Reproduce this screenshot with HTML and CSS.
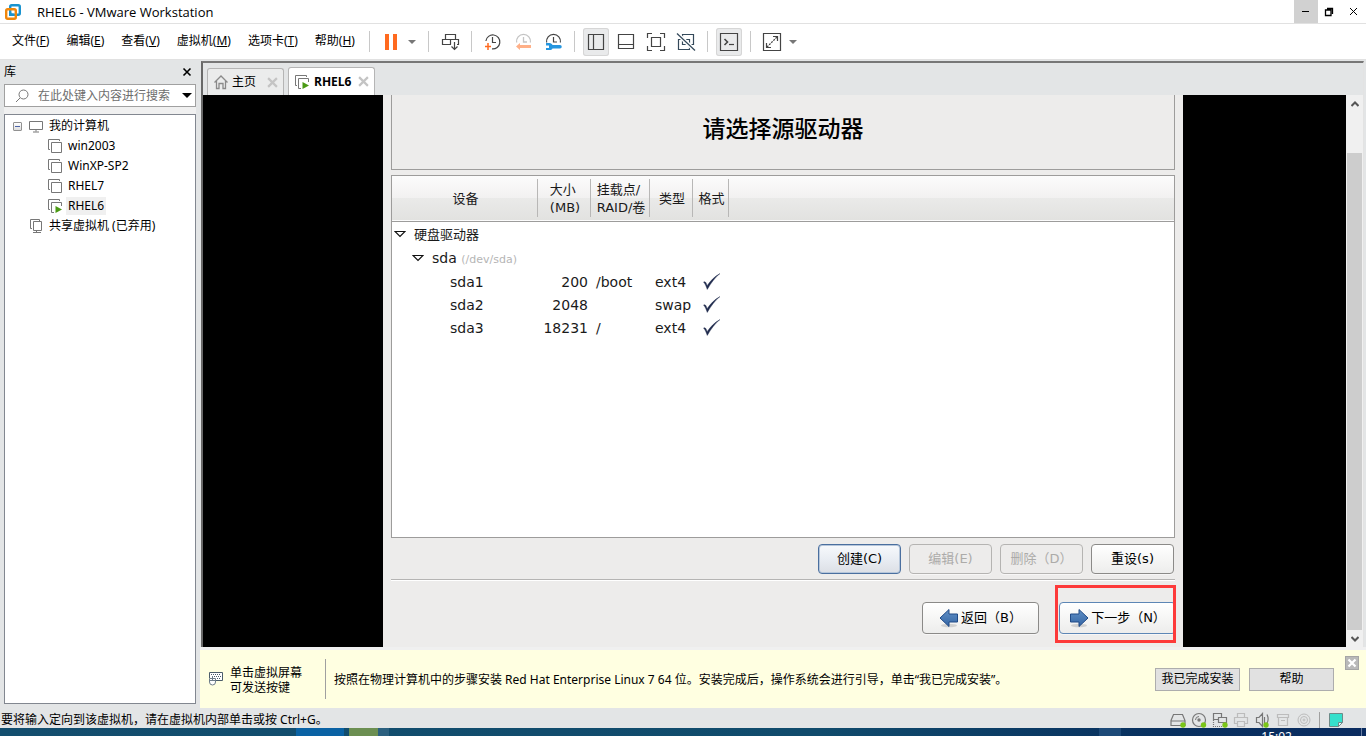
FILE: index.html
```html
<!DOCTYPE html>
<html lang="zh-CN">
<head>
<meta charset="utf-8">
<title>RHEL6 - VMware Workstation</title>
<link rel="stylesheet" href="styles.css">
</head>
<body>
<svg class="defs" aria-hidden="true">
  <symbol id="vm" viewBox="0 0 16 16"><path d="M3 11.500H1.500v-10h11V3" class="line"/><path d="M4.500 4.500h10v10h-10z" class="line"/></symbol>
  <symbol id="vm-on" viewBox="0 0 16 16"><path d="M3 11.500H1.500v-10h11V3M7 14.500H4.500v-10h10V8" class="line"/><path d="M8.500 8l6.500 3.500-6.500 3.500z" fill="#4a9a14"/></symbol>
  <symbol id="check" viewBox="0 0 18 18"><path d="M1.500 9.500c1.200-.6 2.300-.3 3.300 3.500C8 8.500 11.500 4.500 17 1.500 12 5.500 8.500 10.500 5 16.500 3.800 13.500 3 11 1.500 9.500z" fill="#1f2a4d" stroke="#1f2a4d" stroke-width=".4"/></symbol>
  <symbol id="expand" viewBox="0 0 12 8"><path d="M1 1.500h10L6 6.500z" fill="#fff" stroke="#111" stroke-width="1.200"/></symbol>
  <symbol id="caret" viewBox="0 0 8 4"><path d="M0 0h8L4 4z"/></symbol>
  <symbol id="cross" viewBox="0 0 10 10"><path d="M1 1l8 8M9 1L1 9" fill="none" stroke="currentColor" stroke-width="2"/></symbol>
  <linearGradient id="blue" x1="0" y1="0" x2="0" y2="1"><stop offset="0" stop-color="#6190c6"/><stop offset="1" stop-color="#3465a4"/></linearGradient>
</svg>

<div class="window">
  <header class="titlebar">
    <svg class="logo" viewBox="0 0 16 16"><g fill="none" stroke-width="2.400"><rect x="5.200" y="1.200" width="9.600" height="9.600" rx="1.500" stroke="#1993cf"/><rect x="1.200" y="5.200" width="9.600" height="9.600" rx="1.500" stroke="#f0870c"/><path d="M5.200 8.500v2.300h3.500" stroke="#1993cf"/></g></svg>
    <h1 class="title">RHEL6 - VMware Workstation</h1>
    <button class="win-btn win-btn-hover" aria-label="最小化"><svg viewBox="0 0 10 10"><path d="M2 4.500h7" stroke="#000" fill="none"/></svg></button>
    <button class="win-btn" aria-label="还原"><svg viewBox="0 0 10 10"><path d="M1.500 3h5.500v5.500H1.500zM3 1.500h5.500V7" stroke="#000" stroke-width="1.300" fill="none"/></svg></button>
    <button class="win-btn" aria-label="关闭"><svg viewBox="0 0 10 10"><path d="M2 1l7 7M9 1L2 8" stroke="#000" fill="none"/></svg></button>
  </header>

  <div class="menubar">
    <nav class="menu">
      <button>文件(<u>F</u>)</button>
      <button>编辑(<u>E</u>)</button>
      <button>查看(<u>V</u>)</button>
      <button>虚拟机(<u>M</u>)</button>
      <button>选项卡(<u>T</u>)</button>
      <button>帮助(<u>H</u>)</button>
    </nav>
    <div class="toolbar">
      <span class="sep"></span>
      <div class="tools">
        <button class="tool" aria-label="挂起"><svg viewBox="0 0 26 28"><path d="M7 6h4v16H7zM15 6h4v16h-4z" fill="#ff6a1f"/></svg></button>
        <button class="drop" aria-label="电源选项"><svg><use href="#caret"/></svg></button>
      </div>
      <span class="sep"></span>
      <div class="tools">
        <button class="tool" aria-label="发送按键"><svg viewBox="0 0 26 28"><path d="M8.500 11.500v-5h10v5M14 16.500H5.500v-5h16v5h-1.500M13.500 11.500v5" class="dark"/><path d="M17.500 14v7M14.500 18.500l3 3 3-3" class="dark"/></svg></button>
      </div>
      <span class="sep"></span>
      <div class="tools tools-wide">
        <button class="tool" aria-label="拍摄快照"><svg viewBox="0 0 26 28"><path d="M5.900 13A7 7 0 1 1 12 20.900M12.500 9v5.500H16" class="dark"/><path d="M8 15v7M5 18.500h6" stroke="#ff6a1f" stroke-width="1.500" fill="none"/></svg></button>
        <button class="tool" aria-label="恢复快照"><svg viewBox="0 0 26 28"><path d="M6.600 14.500a7 7 0 1 1 13.800 0M13.500 9v5H17" fill="none" stroke="#c4c4c4" stroke-width="1.300"/><path d="M6 18.500l4-3.500v2h11v3H10v2z" fill="#ffb088"/></svg></button>
        <button class="tool" aria-label="快照管理器"><svg viewBox="0 0 26 28"><path d="M6.600 14.500a7 7 0 1 1 13.800 0M13.500 9v5H17" class="dark"/><path d="M6 15h3.500c1.500 0 2.500 1 3 2H20a1.500 1.500 0 0 1 0 3.500h-7.500c-.5 1-1.500 1.500-3 1.500H6v-2h3v-2.500H6z" fill="#2596e0"/></svg></button>
      </div>
      <span class="sep"></span>
      <div class="tools tools-wide">
        <button class="tool pressed" aria-label="显示库"><svg viewBox="0 0 26 28"><path d="M5.500 6.500h15v15h-15zM10.500 6.500v15" class="dark"/></svg></button>
        <button class="tool" aria-label="缩略图栏"><svg viewBox="0 0 26 28"><path d="M5.500 6.500h15v14h-15zM5.500 16.500h15" class="dark"/></svg></button>
        <button class="tool" aria-label="全屏"><svg viewBox="0 0 26 28"><path d="M4.500 10V5.500H9M17 5.500h4.500V10M21.500 18v4.500H17M9 22.500H4.500V18M8.500 9.500h9v9h-9z" class="dark"/></svg></button>
        <button class="tool" aria-label="Unity"><svg viewBox="0 0 26 28"><path d="M9.500 6.500h11v10h-11zM5.500 11.500h11v10h-11z" stroke="#34495a" stroke-width="1.200" fill="none"/><path d="M4 5.500l18 17" stroke="#fff" stroke-width="4" fill="none"/><path d="M4 5.500l18 17" stroke="#34495a" stroke-width="1.200" fill="none"/></svg></button>
      </div>
      <span class="sep"></span>
      <div class="tools">
        <button class="tool pressed" aria-label="控制台视图"><svg viewBox="0 0 26 28"><path d="M4.500 5.500h17v17h-17z" class="dark"/><path d="M8.500 11l3 3-3 3" fill="none" stroke="#444" stroke-width="1.600"/><path d="M13 16.500h5" class="dark"/></svg></button>
      </div>
      <span class="sep"></span>
      <div class="tools">
        <button class="tool" aria-label="拉伸客户机"><svg viewBox="0 0 26 28"><path d="M4.500 5.500h17v17h-17zM14 8.500h4.500V13M7.500 15v4.500H12" class="dark"/><path d="M8 19L18 9" class="dark" stroke-dasharray="2 1"/></svg></button>
        <button class="drop" aria-label="拉伸选项"><svg><use href="#caret"/></svg></button>
      </div>
    </div>
  </div>

  <main class="main">
    <aside class="library">
      <div class="library-head"><h2>库</h2><button aria-label="关闭库"><svg viewBox="0 0 10 10"><path d="M1.500 1.500l7 7M8.500 1.500l-7 7" stroke="#000" stroke-width="1.600"/></svg></button></div>
      <div class="search">
        <svg class="search-icon" viewBox="0 0 14 14"><path d="M5 9L1 13" class="line"/><circle cx="8.500" cy="5.500" r="4.500" class="line"/></svg>
        <input type="text" aria-label="搜索" placeholder="在此处键入内容进行搜索">
        <button aria-label="搜索选项"><svg viewBox="0 0 10 5"><path d="M0 0h10L5 5z"/></svg></button>
      </div>
      <ul class="tree">
        <li>
          <div class="node"><button class="toggle" aria-label="折叠"></button><svg viewBox="0 0 16 16"><path d="M1.500 3.500h13v8h-13zM8 12v1.500M5 14h6" class="line"/></svg><span>我的计算机</span></div>
          <ul>
            <li class="node"><svg><use href="#vm"/></svg><span>win2003</span></li>
            <li class="node"><svg><use href="#vm"/></svg><span>WinXP-SP2</span></li>
            <li class="node"><svg><use href="#vm"/></svg><span>RHEL7</span></li>
            <li class="node"><svg><use href="#vm-on"/></svg><span class="selected">RHEL6</span></li>
          </ul>
        </li>
        <li class="node node-shared"><svg viewBox="0 0 16 16"><path d="M4 10.500H2.500v-9h9V3M5.500 3.500h8v9h-8zM8.500 12.500V14M5 14.500h8" class="line"/></svg><span>共享虚拟机 (已弃用)</span></li>
      </ul>
    </aside>

    <section class="workspace">
      <div class="console">
        <div class="tabs">
          <div class="tab"><svg class="tab-icon" viewBox="0 0 16 16"><path d="M1.500 8.500L8 2l6.500 6.500M3.500 7v7.500H6v-5h4v5h2.500V7" fill="none" stroke="#8a8a8a" stroke-width="1.300"/></svg><button class="tab-name">主页</button><button class="tab-close" aria-label="关闭主页"><svg><use href="#cross"/></svg></button></div>
          <div class="tab tab-active"><svg class="tab-icon"><use href="#vm-on"/></svg><button class="tab-name">RHEL6</button><button class="tab-close" aria-label="关闭 RHEL6"><svg><use href="#cross"/></svg></button></div>
        </div>
        <div class="viewport">
          <div class="stage">
            <div class="guest">
              <div class="banner"><h2>请选择源驱动器</h2></div>
              <div class="grid-box">
                <table class="disks">
                  <colgroup><col class="c-dev"><col class="c-size"><col class="c-mount"><col class="c-type"><col class="c-format"><col></colgroup>
                  <thead>
                    <tr><th><span>设备</span></th><th><span>大小<br>(MB)</span></th><th><span>挂载点/<br>RAID/卷</span></th><th><span>类型</span></th><th><span>格式</span></th><th></th></tr>
                  </thead>
                  <tbody>
                    <tr class="group"><td colspan="6"><svg class="expander"><use href="#expand"/></svg>硬盘驱动器</td></tr>
                    <tr class="group group-disk"><td colspan="6"><svg class="expander"><use href="#expand"/></svg>sda <small>(/dev/sda)</small></td></tr>
                    <tr><td class="part">sda1</td><td class="num">200</td><td>/boot</td><td>ext4</td><td class="fmt"><svg><use href="#check"/></svg></td><td></td></tr>
                    <tr><td class="part">sda2</td><td class="num">2048</td><td></td><td>swap</td><td class="fmt"><svg><use href="#check"/></svg></td><td></td></tr>
                    <tr><td class="part">sda3</td><td class="num">18231</td><td>/</td><td>ext4</td><td class="fmt"><svg><use href="#check"/></svg></td><td></td></tr>
                  </tbody>
                </table>
              </div>
              <div class="actions">
                <button class="gtk gtk-focus">创建(C)</button>
                <button class="gtk" disabled>编辑(E)</button>
                <button class="gtk" disabled>删除（D）</button>
                <button class="gtk">重设(s)</button>
              </div>
              <div class="wizard">
                <button class="gtk gtk-nav"><svg viewBox="0 0 20 20"><ellipse cx="10" cy="17.500" rx="8" ry="1.800" fill="#0002"/><path d="M1 10l9-8.500V6h8.500v8H10v4.500z" fill="url(#blue)" stroke="#204a87"/></svg>返回（B）</button>
                <div class="next">
                  <button class="gtk gtk-nav gtk-default"><svg viewBox="0 0 20 20"><ellipse cx="10" cy="17.500" rx="8" ry="1.800" fill="#0002"/><path d="M19 10l-9-8.500V6H1.500v8H10v4.500z" fill="url(#blue)" stroke="#204a87"/></svg>下一步（N）</button>
                  <span class="highlight"></span>
                </div>
              </div>
            </div>
          </div>
          <div class="scrollbar">
            <button aria-label="向上滚动"><svg viewBox="0 0 8 6"><path d="M.5 5L4 1.500 7.500 5" fill="none" stroke="#555" stroke-width="2"/></svg></button>
            <span class="thumb"></span>
            <button aria-label="向下滚动"><svg viewBox="0 0 8 6"><path d="M.5 1L4 4.500 7.500 1" fill="none" stroke="#555" stroke-width="2"/></svg></button>
          </div>
        </div>
      </div>
      <div class="notice">
        <svg class="keyboard" viewBox="0 0 16 16"><path d="M1.500 7V1.500h13v8H8" fill="#fff" stroke="#4c5d6a"/><path d="M3 3.500h10M4 5.500h9M9 7.500h4" stroke="#4c5d6a" stroke-dasharray="1 1" fill="none"/><path d="M1.500 7.500h6V11a3 3 0 0 1-6 0zM4.500 5v5M1.500 9.500h6" fill="#fff" stroke="#6d7c88"/></svg>
        <p class="hint">单击虚拟屏幕<br>可发送按键</p>
        <p class="message">按照在物理计算机中的步骤安装 Red Hat Enterprise Linux 7 64 位。安装完成后，操作系统会进行引导，单击“我已完成安装”。</p>
        <div class="notice-actions"><button class="win32">我已完成安装</button><button class="win32">帮助</button></div>
        <button class="notice-close" aria-label="关闭提示"><svg viewBox="0 0 10 10"><path d="M1.500 1.500l7 7M8.500 1.500l-7 7" stroke="#fff" stroke-width="2.200"/></svg></button>
      </div>
    </section>
  </main>

  <footer class="statusbar">
    <p>要将输入定向到该虚拟机，请在虚拟机内部单击或按 Ctrl+G。</p>
    <div class="devices">
      <svg viewBox="0 0 16 16"><path d="M1 8.500L3.500 2.500h9L15 8.500v5H1zM1 9h14" class="dev"/><circle cx="13" cy="13" r="2.700" fill="#7bc518"/></svg>
      <svg viewBox="0 0 16 16"><circle cx="8" cy="8" r="6.500" class="dev"/><circle cx="8" cy="8" r="1.700" fill="#777"/><path d="M4.500 8A3.500 3.500 0 0 1 8 4.500" class="dev thin"/><circle cx="12.500" cy="13" r="2.700" fill="#7bc518"/></svg>
      <svg viewBox="0 0 16 16"><path d="M1.500 1.500h8v6h-8z" class="dev"/><path d="M6.500 5.500h8v5h-8z" fill="#e3e5e6" stroke="#777" stroke-width="1.200"/><path d="M1.500 8v6.500h9" class="dev" stroke-dasharray="1 1"/><circle cx="13" cy="13" r="2.700" fill="#7bc518"/></svg>
      <svg viewBox="0 0 16 16"><path d="M4.500 5.500v-4h7v4M4 11.500H1.500v-6h13v6H12M4.500 9.500h7v5h-7z" class="dev off"/></svg>
      <svg viewBox="0 0 16 16"><path d="M2.500 5.500H5l3.500-4v13L5 10.500H2.500zM10.500 5v6M13 2.500c1.500 3 1.500 6 0 9" class="dev"/><circle cx="12" cy="13" r="2.700" fill="#7bc518"/></svg>
      <svg viewBox="0 0 16 16"><path d="M2.500 2.500h11v3h-11zM3.500 5.500v8h9v-8M6 8.500h4" class="dev off"/></svg>
      <svg viewBox="0 0 16 16"><circle cx="8" cy="8" r="6" class="dev off thin"/><circle cx="8" cy="8" r="3.500" class="dev off thin"/><circle cx="8" cy="8" r="1" class="dev off thin"/></svg>
    </div>
    <svg class="note" viewBox="0 0 16 16"><path d="M1.500 1.500h13v9l-4 4h-9z" fill="#35e0cc" stroke="#6d8a88"/><path d="M10.500 14.500v-4h4z" fill="#dff" stroke="#6d8a88"/></svg>
  </footer>
  <div class="taskbar"><span class="task task-on"></span><span class="task task-green"></span><span class="task task-dim"></span><span class="tray"></span><time class="clock">15:02</time></div>
</div>
</body>
</html>
```

FILE: styles.css
```css
* { box-sizing: border-box; }
body, h1, h2, p, ul { margin: 0; padding: 0; font-size: 12px; font-weight: normal; }
body { font-family: "Noto Sans", "Noto Sans CJK SC", sans-serif; line-height: 16px; color: #000; }
button { font: inherit; color: inherit; border: 0; padding: 0; background: none; white-space: nowrap; }
button svg { display: block; }
ul { list-style: none; }
.defs { position: absolute; width: 0; height: 0; }
.line { fill: none; stroke: #777; }
.dark { fill: none; stroke: #444; stroke-width: 1.2; }

.window { display: flex; flex-direction: column; height: 100vh; overflow: hidden; background: #e3e5e6; }

.titlebar { display: flex; align-items: center; height: 24px; flex: none; padding-left: 5px; background: #fff; border-bottom: 1px solid #e1e1e1; }
.logo { width: 16px; height: 16px; }
.title { flex: 1; padding-left: 16px; font-family: "Open Sans", sans-serif; font-size: 13px; }
.win-btn { display: grid; place-items: center; width: 24px; height: 23px; padding-right: 2px; }
.win-btn svg { width: 10px; height: 10px; }
.win-btn-hover { background: #d1d1d1; }

.menubar { display: flex; align-items: center; height: 36px; flex: none; background: #fff; border-bottom: 1px solid #e1e1e1; }
.menu { display: flex; gap: 17px; width: 369px; flex: none; padding: 0 0 2px 12px; }
.toolbar { display: flex; align-items: center; gap: 8px; }
.sep { width: 1px; height: 21px; background: #c8c8c8; }
.tools { display: flex; align-items: center; }
.tools-wide { gap: 4px; }
.tool { width: 26px; height: 28px; border-radius: 3px; }
.tool svg { width: 26px; height: 28px; }
.pressed { background: #e9eaeb; box-shadow: inset 0 0 0 1px #d6d6d6; }
.drop { display: grid; place-items: center; width: 16px; height: 28px; }
.drop svg { width: 8px; height: 4px; fill: #777; }

.main { display: flex; flex: 1; min-height: 0; }
.library { display: flex; flex-direction: column; width: 200px; flex: none; padding: 0 4px 4px; }
.library-head { display: flex; align-items: center; justify-content: space-between; height: 24px; padding-right: 4px; }
.library-head svg { width: 10px; height: 10px; }
.search { display: flex; align-items: center; height: 23px; flex: none; padding: 0 3px 0 10px; background: #fff; border: 1px solid #a0a0a0; box-shadow: 0 7px #f0f0f0; }
.search-icon { width: 14px; height: 14px; flex: none; }
.search input { flex: 1; min-width: 0; padding: 0 0 0 9px; border: 0; outline: 0; background: none; font: inherit; }
.search input::placeholder { color: #6d6d6d; opacity: 1; }
.search button svg { width: 10px; height: 5px; }
.tree { flex: 1; margin-top: 7px; padding-top: 1px; background: #fff; border: 1px solid #828790; }
.node { display: flex; align-items: center; height: 20px; padding-left: 42px; }
.node > svg { width: 16px; height: 16px; flex: none; }
.node > span { padding: 0 2px; margin-left: 3px; line-height: 18px; }
div.node { padding-left: 8px; }
.toggle { width: 9px; height: 9px; margin-right: 6px; border: 1px solid #919191; border-radius: 1px; background: linear-gradient(#4b63a7, #4b63a7) center / 5px 1px no-repeat, linear-gradient(#fff, #ddd); }
.node-shared { padding-left: 23px; }
.selected { background: #f0f0f0; }

.workspace { display: flex; flex-direction: column; flex: 1; min-width: 0; }
.console { display: flex; flex-direction: column; flex: 1; min-height: 0; margin: 1px 2px 0 1px; border: solid #696969; border-width: 2px 1px 0 2px; border-top-color: #777; border-right-color: #e3e3e3; }
.tabs { display: flex; align-items: flex-end; gap: 4px; height: 32px; flex: none; padding-left: 4px; }
.tab { display: flex; align-items: center; height: 27px; padding: 0 5px; border: 1px solid #b5b5b5; border-bottom: 0; border-radius: 3px 3px 0 0; background: #ebecec; }
.tab-icon { width: 16px; height: 16px; }
.tab-name { padding: 0 11px 0 3px; }
.tab-active { height: 28px; background: #fff; }
.tab-active .tab-name { padding: 0 7px 0 4px; font-family: "Open Sans", sans-serif; font-weight: bold; }
.tab-close { color: #c4c4c4; }
.tab-close svg { width: 11px; height: 11px; }
.viewport { display: flex; flex: 1; min-height: 0; }
.stage { display: grid; grid-template-columns: 180fr 800px 163fr; flex: 1; min-width: 0; background: #000; overflow: hidden; }
.scrollbar { display: flex; flex-direction: column; align-items: stretch; width: 17px; flex: none; background: #f0f0f0; }
.scrollbar button { display: grid; place-items: center; height: 17px; }
.scrollbar svg { width: 8px; height: 6px; }
.thumb { flex: 1; margin: 41px 1px 0; background: #cdcdcd; }

.guest { grid-column: 2; display: flex; flex-direction: column; padding: 0 8px; background: #edeceb; font: 13px/18px "DejaVu Sans", "Noto Sans CJK SC", sans-serif; }
.banner { height: 75px; flex: none; border: 1px solid #9d9c9b; border-top: 0; text-align: center; }
.banner h2 { padding-top: 16px; font-family: "Noto Sans CJK SC", sans-serif; font-size: 23px; font-weight: 500; line-height: 32px; }
.grid-box { flex: 1; min-height: 0; margin: 5px 0 6px; border: 1px solid #9d9c9b; background: #fff; }
.disks { width: 100%; border-collapse: collapse; table-layout: fixed; color: #1a1a1a; font-size: 14px; }
.c-dev { width: 146px; }
.c-size { width: 53px; }
.c-mount { width: 59px; }
.c-type { width: 43px; }
.c-format { width: 36px; }
.disks thead tr { height: 45px; background: linear-gradient(#fcfcfc, #f2f1f1 50%, #eaeae9 50%, #e2e2e0); border-bottom: 1px solid #9d9c9b; }
.disks th { padding: 0; font-size: 13px; font-weight: normal; background: linear-gradient(#b8b7b6, #b8b7b6) right center / 1px 38px no-repeat; }
.disks th:last-child { background: none; }
.disks th span { display: inline-block; padding: 1px 0 0 1px; text-align: left; white-space: nowrap; }
.disks td { height: 23px; padding: 0 0 0 5px; white-space: nowrap; line-height: 20px; }
.disks .group td { height: 24px; padding: 3px 0 0 2px; font-size: 13px; }
.disks .group-disk td { padding-left: 20px; font-size: 14px; }
.disks small { color: #b5b5b5; font-size: 11px; }
.expander { width: 12px; height: 8px; margin-right: 8px; vertical-align: 1px; }
.disks .part { padding-left: 58px; }
.disks .num { padding: 0 3px 0 0; text-align: right; }
.disks .fmt { padding-left: 9px; }
.fmt svg { display: block; width: 19px; height: 19px; }

.actions { display: flex; justify-content: flex-end; gap: 8px; padding: 0 1px 5px 0; border-bottom: 1px solid #b5b4b3; box-shadow: 0 1px #fff; }
.gtk { display: flex; align-items: center; justify-content: center; min-width: 83px; height: 30px; border: 1px solid #8b8a88; border-radius: 4px; background: linear-gradient(#fff, #f6f6f5 50%, #ededec); box-shadow: 0 1px #fff8; }
.gtk:disabled { color: #acaba9; border-color: #b5b4b2; background: #edeceb; }
.gtk-focus { border-color: #4a6f9f; background: linear-gradient(#f7f9fc, #e9edf3 50%, #dcdfe5); box-shadow: inset 0 0 0 1px #b6c6da; }
.wizard { display: flex; justify-content: flex-end; gap: 20px; margin-right: -1px; padding: 22px 0 13px; }
.gtk-nav { min-width: 117px; height: 32px; }
.gtk-nav svg { width: 20px; height: 20px; margin-right: 2px; }
.gtk-default { border-color: #5d86b5; }
.next { position: relative; }
.highlight { position: absolute; inset: -17px 0 -9px -4px; border: 3px solid #fd3a3a; pointer-events: none; }

.notice { display: flex; align-items: center; height: 61px; flex: none; padding-left: 8px; border-top: 3px solid #f0f0f0; background: #ffffe1; }
.keyboard { width: 16px; height: 16px; flex: none; }
.hint { width: 101px; flex: none; padding: 2px 0 0 6px; line-height: 15px; }
.message { flex: 1; min-width: 0; padding: 13px 0 11px 8px; border-left: 1px solid #a0a0a0; white-space: nowrap; }
.notice-actions { display: flex; gap: 9px; }
.win32 { width: 85px; height: 23px; border: 1px solid #adadad; background: #e1e1e1; }
.notice-close { display: grid; place-items: center; align-self: flex-start; width: 14px; height: 14px; margin: 6px 7px 0 11px; background: #b9b9b9; border: 1px solid #a5a5a5; }
.notice-close svg { width: 10px; height: 10px; }

.statusbar { display: flex; align-items: center; height: 20px; flex: none; padding: 3px 22px 0 1px; }
.statusbar p { flex: 1; }
.devices { display: flex; gap: 5px; padding-right: 7px; margin-right: 8px; border-right: 1px solid #a0a0a0; }
.devices svg, .note { display: block; width: 16px; height: 16px; }
.dev { fill: none; stroke: #777; stroke-width: 1.2; }
.thin { stroke-width: 1; }
.off { stroke: #bcbcbc; }

.taskbar { display: flex; height: 8px; flex: none; padding: 0 74px 0 296px; overflow: hidden; background: linear-gradient(#6b7fa3, #6b7fa3) right 4px top / 1px 100% no-repeat, linear-gradient(90deg, #134e6e, #104b6c 60%, #08305f 85%, #0a2c60); }
.task { width: 11px; }
.task-on { width: 48px; margin-right: 5px; background: #0a62a4; }
.task-green { width: 29px; background: #6c8f52; }
.task-dim { background: #2b607f; }
.tray { width: 22px; margin: 0 140px 0 auto; background: #1d4a78; }
.clock { color: #fff; line-height: 18px; }
```
